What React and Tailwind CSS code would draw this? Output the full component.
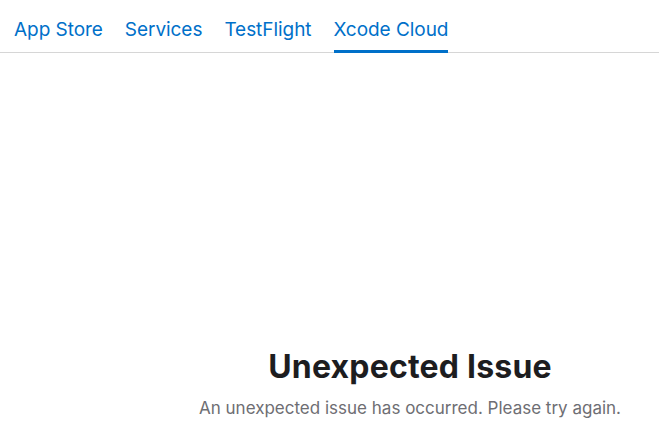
const tabs = ['App Store', 'Services', 'TestFlight', 'Xcode Cloud'];

export default function App() {
  const active = 'Xcode Cloud';

  return (
    <div className="h-[439px] w-full bg-white font-['Inter',sans-serif] flex flex-col">
      {/* tab bar */}
      <nav className="flex items-end gap-[22px] border-b border-[#d6d6d6] pl-[14px] h-[53px]">
        {tabs.map((tab) => (
          <div
            key={tab}
            className={
              'pb-[11px] text-[19px] leading-none tracking-[-0.05px] text-[#0070c9] border-b-[3px] -mb-px ' +
              (tab === active ? 'border-[#0070c9]' : 'border-transparent')
            }
          >
            {tab}
          </div>
        ))}
      </nav>

      {/* error message */}
      <section className="flex-1 flex flex-col justify-end pb-[22px] pl-[161px] text-center">
        <h1 className="text-[32px] font-bold leading-none tracking-[0.2px] text-[#1d1d1f]">
          Unexpected Issue
        </h1>
        <p className="mt-[17px] text-[17px] leading-none text-[#6e6e73]">
          An unexpected issue has occurred. Please try again.
        </p>
      </section>
    </div>
  );
}
